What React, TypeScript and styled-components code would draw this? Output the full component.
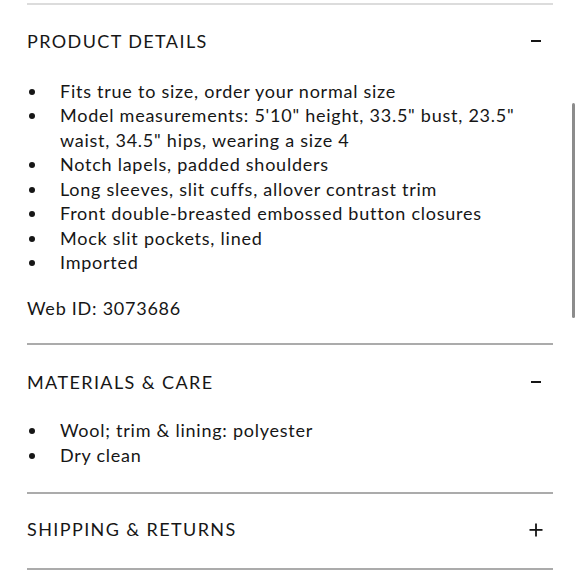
import React from "react";
import styled, { createGlobalStyle } from "styled-components";

const Global = createGlobalStyle`
  html, body { margin: 0; padding: 0; background: #ffffff; }
  body { font-family: Lato, "Liberation Sans", sans-serif; color: #161616; }
`;

const Page = styled.div`
  position: relative;
  width: 580px;
  height: 580px;
  overflow: hidden;
  padding: 3px 27px 0 27px;
  box-sizing: border-box;
`;

const Section = styled.section<{ $top: number; $bottom: number; $light?: boolean }>`
  border-top: 2px solid ${(p) => (p.$light ? "#dcdcdc" : "#ababab")};
  padding: ${(p) => p.$top}px 0 ${(p) => p.$bottom}px 0;
`;

const Header = styled.div`
  display: flex;
  align-items: center;
  justify-content: space-between;
  height: 24.5px;
`;

const Title = styled.h2`
  margin: 0;
  font-size: 18px;
  line-height: 24.5px;
  font-weight: 400;
  letter-spacing: 1.4px;
  text-transform: uppercase;
`;

const Toggle = styled.span`
  display: flex;
  align-items: center;
  justify-content: center;
  width: 14px;
  height: 14px;
  margin-right: 10px;
`;

const List = styled.ul<{ $gap: number }>`
  list-style: none;
  margin: ${(p) => p.$gap}px 0 0 0;
  padding: 0;
`;

const Item = styled.li`
  display: grid;
  grid-template-columns: 33px 1fr;
  font-size: 18px;
  line-height: 24.5px;
  letter-spacing: 0.75px;
`;

const Dot = styled.span`
  width: 6px;
  height: 6px;
  border-radius: 50%;
  background: #161616;
  margin: 10px 0 0 2px;
`;

const Note = styled.p`
  margin: 21px 0 0 0;
  font-size: 18px;
  line-height: 24.5px;
  letter-spacing: 0.75px;
`;

const ScrollThumb = styled.div`
  position: absolute;
  left: 572px;
  top: 103px;
  width: 3px;
  height: 215px;
  border-radius: 2px;
  background: #8c8c8c;
`;

const Minus = () => (
  <Toggle>
    <svg width="14" height="14" viewBox="0 0 14 14">
      <rect x="2" y="6" width="10" height="2" fill="#161616" />
    </svg>
  </Toggle>
);

const Plus = () => (
  <Toggle>
    <svg width="14" height="14" viewBox="0 0 14 14">
      <rect x="0.5" y="6" width="13" height="1.8" fill="#161616" />
      <rect x="6.1" y="0.5" width="1.8" height="13" fill="#161616" />
    </svg>
  </Toggle>
);

const details = [
  "Fits true to size, order your normal size",
  'Model measurements: 5\'10" height, 33.5" bust, 23.5" waist, 34.5" hips, wearing a size 4',
  "Notch lapels, padded shoulders",
  "Long sleeves, slit cuffs, allover contrast trim",
  "Front double-breasted embossed button closures",
  "Mock slit pockets, lined",
  "Imported",
];

const materials = ["Wool; trim & lining: polyester", "Dry clean"];

export default function App() {
  return (
    <>
      <Global />
      <Page>
        <Section $top={24} $bottom={23} $light>
          <Header>
            <Title>Product Details</Title>
            <Minus />
          </Header>
          <List $gap={25.4}>
            {details.map((d) => (
              <Item key={d}>
                <Dot />
                <span>{d}</span>
              </Item>
            ))}
          </List>
          <Note>Web ID: 3073686</Note>
        </Section>
        <Section $top={24.7} $bottom={25.3}>
          <Header>
            <Title>Materials &amp; Care</Title>
            <Minus />
          </Header>
          <List $gap={23.5}>
            {materials.map((d) => (
              <Item key={d}>
                <Dot />
                <span>{d}</span>
              </Item>
            ))}
          </List>
        </Section>
        <Section $top={23} $bottom={26}>
          <Header>
            <Title>Shipping &amp; Returns</Title>
            <Plus />
          </Header>
        </Section>
        <Section $top={0} $bottom={0} />
        <ScrollThumb />
      </Page>
    </>
  );
}
